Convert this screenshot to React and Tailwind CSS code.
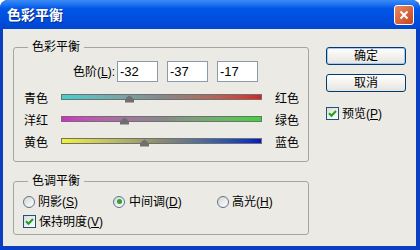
import React from 'react'

const sliders = [
    { left: '青色', right: '红色', value: -32, bar: 'from-[#3ed0d3] via-[#838989] to-[#d42222]' },
    { left: '洋红', right: '绿色', value: -37, bar: 'from-[#d22cc6] via-[#888888] to-[#36d636]' },
    { left: '黄色', right: '蓝色', value: -17, bar: 'from-[#f3f32c] via-[#8a8a70] to-[#1212c4]' },
]

function Underlined({ text, letter }) {
    return (
        <span>
            {text}(<span className="underline underline-offset-[1px]">{letter}</span>)
        </span>
    )
}

function CheckBox() {
    return (
        <span className="w-[13px] h-[13px] shrink-0 border border-[#1c5180] bg-linear-to-br from-[#dcdcd6] to-white flex items-center justify-center">
            <svg width="9" height="9" viewBox="0 0 9 9">
                <path d="M1 4.2 L3.5 6.8 L8 2" fill="none" stroke="#21a121" strokeWidth="2" />
            </svg>
        </span>
    )
}

function Radio({ checked }) {
    return (
        <span className="w-[12px] h-[12px] shrink-0 rounded-full border border-[#5a7390] bg-linear-to-br from-[#d6d6d0] to-white flex items-center justify-center">
            {checked && <span className="w-[5px] h-[5px] rounded-full bg-[#2aa52a]" />}
        </span>
    )
}

function Thumb({ value }) {
    // bar is 201px wide and covers -100..100
    const left = ((value + 100) / 200) * 201 - 5.5
    return (
        <svg className="absolute top-[7px]" style={{ left }} width="11" height="8" viewBox="0 0 11 8">
            <path d="M5.5 0.5 C7 1.5 9 3 10 4.5 V7.5 H1 V4.5 C2 3 4 1.5 5.5 0.5 Z" fill="#6f6f6f" />
        </svg>
    )
}

export default function App() {
    return (
        <div className="w-[420px] h-[250px] bg-[#0a3fc4] rounded-t-[8px] flex flex-col overflow-hidden text-[12px] leading-[16px] text-black font-['Liberation_Sans','Noto_Sans_CJK_SC',sans-serif]">
            {/* Title bar */}
            <div className="h-[29px] shrink-0 flex items-center pl-[7px] pr-[6px] bg-linear-to-b from-[#3a8cf7] via-[#0056e8] via-30% to-[#0046d2]">
                <span className="text-white font-bold text-[14px] [text-shadow:1px_1px_0_#0b2a8a]">色彩平衡</span>
                <span className="ml-auto w-[20px] h-[20px] rounded-[3px] border border-white bg-linear-to-br from-[#e98a62] to-[#c4411c] flex items-center justify-center">
                    <svg width="10" height="10" viewBox="0 0 10 10">
                        <path d="M1.5 1.5 L8.5 8.5 M8.5 1.5 L1.5 8.5" stroke="white" strokeWidth="2" />
                    </svg>
                </span>
            </div>

            {/* Client area */}
            <div className="flex-1 ml-[3px] mr-[4px] mb-[4px] bg-[#eceae5] flex">
                <div className="ml-[10px] w-[296px] flex flex-col">
                    <fieldset className="mt-[10px] border border-[#a6a6a0] rounded-[3px] pb-[7px]">
                        <legend className="ml-[14px] px-[4px]">色彩平衡</legend>
                        <div className="mt-[6px] h-[21px] flex items-center">
                            <span className="w-[101px] text-right">
                                <Underlined text="色阶" letter="L" />:
                            </span>
                            <div className="ml-[2px] flex gap-[9px]">
                                {['-32', '-37', '-17'].map((v) => (
                                    <span key={v} className="w-[41px] h-[21px] bg-white border border-[#8c9aa9] pl-[2px] flex items-center text-[13px]">
                                        {v}
                                    </span>
                                ))}
                            </div>
                        </div>
                        <div className="mt-[6px] flex flex-col">
                            {sliders.map((s) => (
                                <div key={s.left} className="h-[22px] flex items-center">
                                    <span className="ml-[10px] w-[37px]">{s.left}</span>
                                    <div className="relative w-[201px] h-[22px]">
                                        <div className={`mt-[6px] h-[6px] border border-[#707070] bg-linear-to-r ${s.bar}`} />
                                        <Thumb value={s.value} />
                                    </div>
                                    <span className="ml-[13px]">{s.right}</span>
                                </div>
                            ))}
                        </div>
                    </fieldset>

                    <fieldset className="mt-[11px] border border-[#a6a6a0] rounded-[3px] pb-[6px]">
                        <legend className="ml-[14px] px-[4px]">色调平衡</legend>
                        <div className="mt-[6px] h-[13px] flex items-center pl-[9px]">
                            <label className="w-[90px] flex items-center gap-[3px]">
                                <Radio />
                                <Underlined text="阴影" letter="S" />
                            </label>
                            <label className="w-[104px] flex items-center gap-[4px]">
                                <Radio checked />
                                <Underlined text="中间调" letter="D" />
                            </label>
                            <label className="flex items-center gap-[3px]">
                                <Radio />
                                <Underlined text="高光" letter="H" />
                            </label>
                        </div>
                        <label className="mt-[7px] h-[13px] flex items-center gap-[3px] pl-[9px]">
                            <CheckBox />
                            <Underlined text="保持明度" letter="V" />
                        </label>
                    </fieldset>
                </div>

                {/* Buttons */}
                <div className="ml-[17px] mt-[18px] flex flex-col">
                    <button className="w-[80px] h-[18px] rounded-[3px] border border-[#003c74] bg-linear-to-b from-white to-[#e6e4dc] shadow-[inset_0_0_0_1px_#a8c8f4] flex items-center justify-center">
                        确定
                    </button>
                    <button className="mt-[9px] w-[80px] h-[18px] rounded-[3px] border border-[#003c74] bg-linear-to-b from-white to-[#e6e4dc] flex items-center justify-center">
                        取消
                    </button>
                    <label className="mt-[15px] h-[13px] flex items-center gap-[3px]">
                        <CheckBox />
                        <Underlined text="预览" letter="P" />
                    </label>
                </div>
            </div>
        </div>
    )
}
